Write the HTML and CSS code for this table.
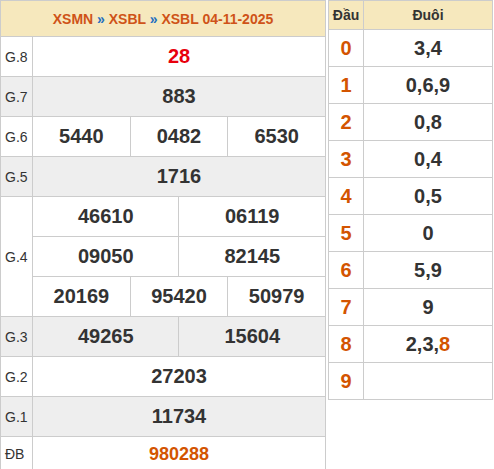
FILE: index.html
```html
<!DOCTYPE html>
<html lang="vi">
<head>
<meta charset="utf-8">
<title>XSBL 04-11-2025</title>
<link rel="stylesheet" href="styles.css">
</head>
<body>
<div class="wrap">
  <table class="kq">
    <colgroup>
      <col class="c-lbl">
      <col span="6">
    </colgroup>
    <tr class="head">
      <td colspan="7"><span class="lnk">XSMN</span> <span class="sep">»</span> <span class="lnk">XSBL</span> <span class="sep">»</span> <span class="lnk">XSBL 04-11-2025</span></td>
    </tr>
    <tr>
      <td class="lbl">G.8</td>
      <td colspan="6" class="num red">28</td>
    </tr>
    <tr class="alt">
      <td class="lbl">G.7</td>
      <td colspan="6" class="num">883</td>
    </tr>
    <tr>
      <td class="lbl">G.6</td>
      <td colspan="2" class="num">5440</td>
      <td colspan="2" class="num">0482</td>
      <td colspan="2" class="num">6530</td>
    </tr>
    <tr class="alt">
      <td class="lbl">G.5</td>
      <td colspan="6" class="num">1716</td>
    </tr>
    <tr>
      <td class="lbl" rowspan="3">G.4</td>
      <td colspan="3" class="num">46610</td>
      <td colspan="3" class="num">06119</td>
    </tr>
    <tr>
      <td colspan="3" class="num">09050</td>
      <td colspan="3" class="num">82145</td>
    </tr>
    <tr>
      <td colspan="2" class="num">20169</td>
      <td colspan="2" class="num">95420</td>
      <td colspan="2" class="num">50979</td>
    </tr>
    <tr class="alt">
      <td class="lbl">G.3</td>
      <td colspan="3" class="num">49265</td>
      <td colspan="3" class="num">15604</td>
    </tr>
    <tr>
      <td class="lbl">G.2</td>
      <td colspan="6" class="num">27203</td>
    </tr>
    <tr class="alt">
      <td class="lbl">G.1</td>
      <td colspan="6" class="num">11734</td>
    </tr>
    <tr class="db">
      <td class="lbl">ĐB</td>
      <td colspan="6" class="num orange">980288</td>
    </tr>
  </table>

  <table class="lt">
    <tr class="lt-head">
      <td class="dau">Đầu</td>
      <td>Đuôi</td>
    </tr>
    <tr><td class="d">0</td><td class="v">3,4</td></tr>
    <tr><td class="d">1</td><td class="v">0,6,9</td></tr>
    <tr><td class="d">2</td><td class="v">0,8</td></tr>
    <tr><td class="d">3</td><td class="v">0,4</td></tr>
    <tr><td class="d">4</td><td class="v">0,5</td></tr>
    <tr><td class="d">5</td><td class="v">0</td></tr>
    <tr><td class="d">6</td><td class="v">5,9</td></tr>
    <tr><td class="d">7</td><td class="v">9</td></tr>
    <tr><td class="d">8</td><td class="v">2,3,<span class="hl">8</span></td></tr>
    <tr><td class="d">9</td><td class="v"></td></tr>
  </table>
</div>
</body>
</html>
```

FILE: styles.css
```css
html, body {
  margin: 0;
  padding: 0;
  background: #fff;
}

body {
  font-family: "Liberation Sans", Arial, sans-serif;
  color: #333;
}

.wrap {
  display: flex;
  align-items: flex-start;
  gap: 2px;
  width: 494px;
}

table {
  border-collapse: collapse;
  table-layout: fixed;
}

td {
  border: 1px solid #ccc;
  padding: 0;
  text-align: center;
  vertical-align: middle;
}

.kq {
  width: 326px;
}

.c-lbl {
  width: 32px;
}

.kq td {
  height: 39px;
}

.kq .head td {
  height: 35px;
  background: #f6e8bd;
  font-size: 14px;
  font-weight: bold;
  color: #cf5318;
}

.kq .head .sep {
  color: #1f6fc0;
}

.kq .alt td {
  background: #eeeeee;
}

.kq .lbl {
  text-align: left;
  padding-left: 4px;
  font-size: 14px;
  color: #333;
}

.kq .num {
  font-size: 20px;
  font-weight: bold;
  color: #333;
}

.kq .red {
  color: #e8000c;
}

.kq .db td {
  height: 30px;
  padding-top: 2px;
}

.kq .db .orange {
  font-size: 18px;
  color: #d35400;
}

.lt {
  width: 165px;
}

.lt td {
  height: 36px;
}

.lt .lt-head td {
  height: 28px;
  background: #f6e8bd;
  font-size: 14px;
  font-weight: bold;
  color: #333;
}

.lt .lt-head .dau {
  width: 34px;
}

.lt .d {
  font-size: 20px;
  font-weight: bold;
  color: #d35400;
}

.lt .v {
  font-size: 20px;
  font-weight: bold;
  color: #333;
}

.lt .hl {
  color: #d35400;
}
```
